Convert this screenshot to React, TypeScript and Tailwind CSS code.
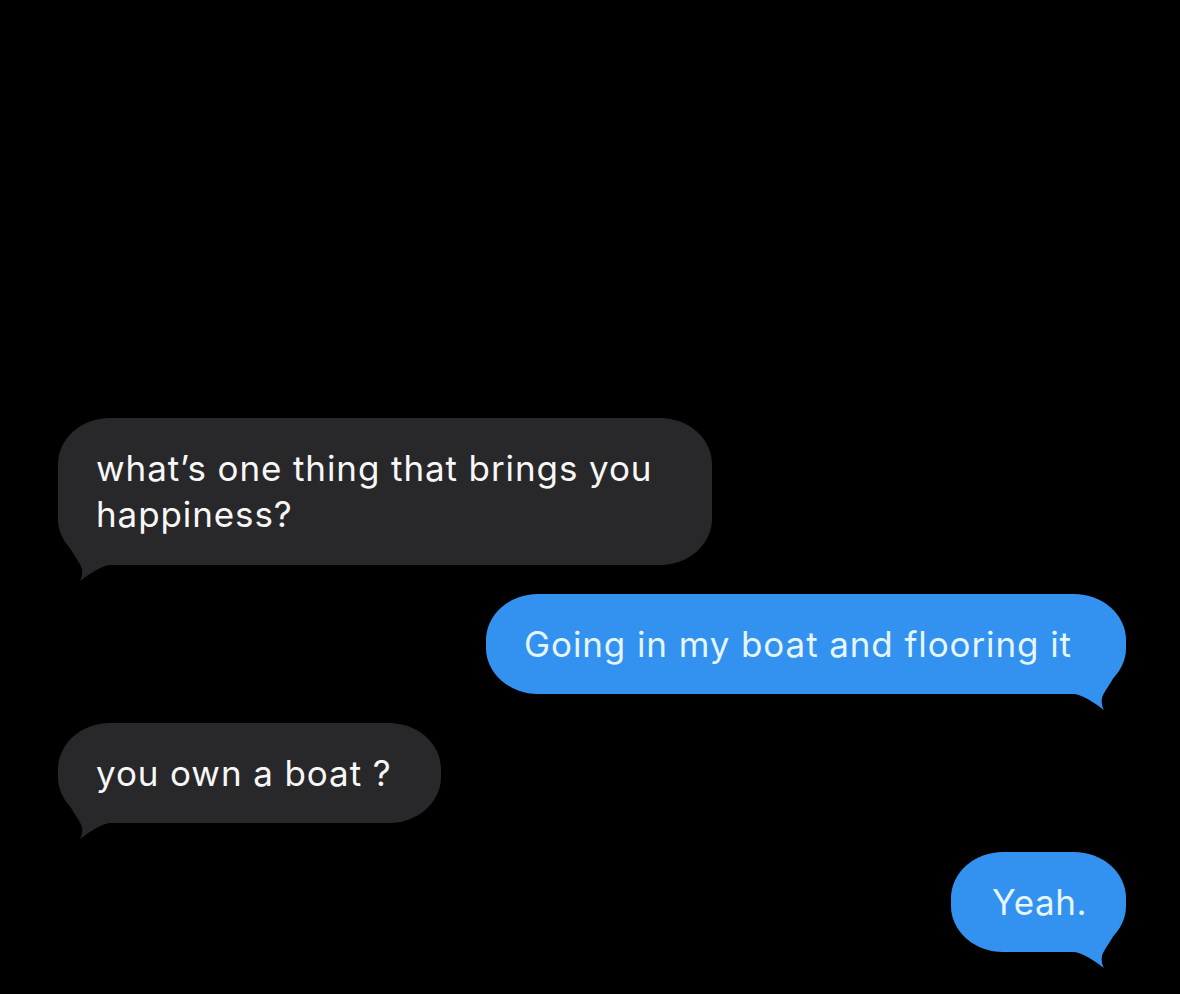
import React from "react";

function TailRight({ color }: { color: string }) {
  return (
    <svg
      className="absolute right-[-4px] bottom-[-18px] w-[55px] h-[62px]"
      viewBox="0 0 55 62"
    >
      <path
        d="M47,0 C45,25 30,38 27,48 C26,54 28,58 29,60 C22,55 12,47 0,44 L0,0 Z"
        fill={color}
      />
    </svg>
  );
}

function TailLeft({ color }: { color: string }) {
  return (
    <svg
      className="absolute left-[-4px] bottom-[-18px] w-[55px] h-[62px]"
      viewBox="0 0 55 62"
    >
      <path
        d="M8,0 C10,25 25,38 28,48 C29,54 27,58 26,60 C33,55 43,47 55,44 L55,0 Z"
        fill={color}
      />
    </svg>
  );
}

const GRAY = "#28282a";
const BLUE = "#3391ef";

export default function App() {
  return (
    <div
      className="w-full h-[994px] bg-black flex flex-col gap-[29px] pt-[418px] pl-[58px] pr-[54px] overflow-hidden"
      style={{ fontFamily: "Inter, 'Liberation Sans', Arial, sans-serif" }}
    >
      <div className="relative self-start w-[654px] rounded-[52px/46px] bg-[#28282a] pl-[38px] pr-[30px] pt-[27px] pb-[28px]">
        <TailLeft color={GRAY} />
        <p className="relative text-[35px] leading-[46px] tracking-[0.9px] text-[#f7f7f7] whitespace-nowrap">
          what’s one thing that brings you
          <br />
          happiness?
        </p>
      </div>

      <div className="relative self-end w-[640px] rounded-[52px/46px] bg-[#3391ef] pl-[38px] pr-[30px] py-[27px]">
        <TailRight color={BLUE} />
        <p className="relative text-[35px] leading-[46px] tracking-[0.9px] text-[#e4f6ff] whitespace-nowrap">
          Going in my boat and flooring it
        </p>
      </div>

      <div className="relative self-start w-[383px] rounded-[52px/46px] bg-[#28282a] pl-[38px] pr-[30px] py-[27px]">
        <TailLeft color={GRAY} />
        <p className="relative text-[35px] leading-[46px] tracking-[0.9px] text-[#f7f7f7] whitespace-nowrap">
          you own a boat ?
        </p>
      </div>

      <div className="relative self-end w-[175px] rounded-[52px/46px] bg-[#3391ef] pl-[41px] pr-[20px] py-[27px]">
        <TailRight color={BLUE} />
        <p className="relative text-[35px] leading-[46px] tracking-[0.6px] text-[#e4f6ff] whitespace-nowrap">
          Yeah.
        </p>
      </div>
    </div>
  );
}
